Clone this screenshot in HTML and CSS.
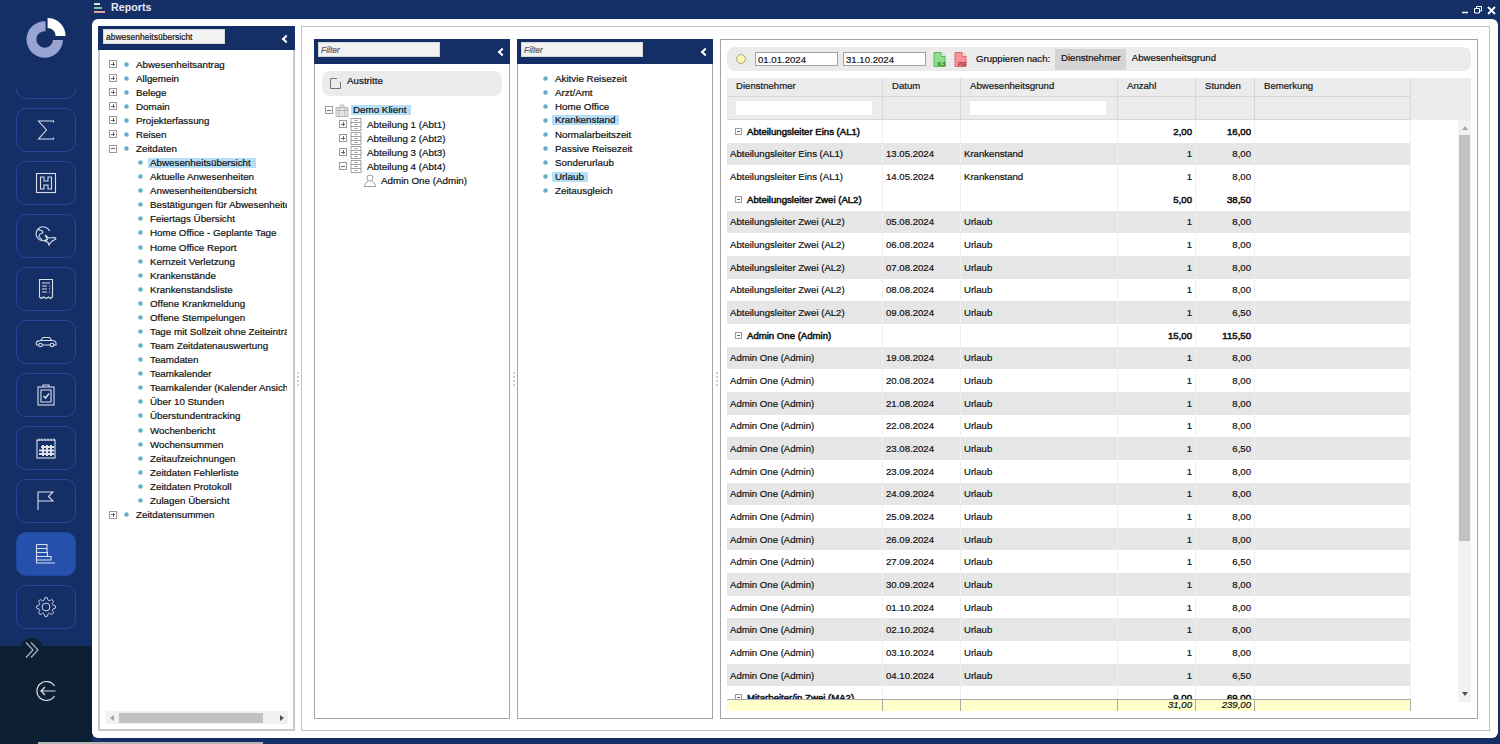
FILE: index.html
```html
<!DOCTYPE html>
<html lang="de">
<head>
    <meta charset="UTF-8">
    <meta name="viewport" content="width=device-width, initial-scale=1.0">
    <title>Reports</title>
    <link rel="stylesheet" href="styles.css">
</head>
<body>

    <!-- Navigation links -->
    <div class="sidebar">
        <div class="logo">
            <svg width="50" height="50" viewBox="0 0 50 50">
                <path d="M24.500 8.300 A18.200 18.200 0 1 0 41.900 27 L32 27 A8.300 8.300 0 1 1 24.500 18.200 Z" fill="#9aa4d2"/>
                <path d="M26.600 5 A18 18 0 0 1 44.600 23 L34.600 23 A8 8 0 0 0 26.600 15 Z" fill="#fff"/>
            </svg>
        </div>
        <div class="nav-list">
            <div class="nav-button"></div>
            <div class="nav-button">
                <svg viewBox="0 0 24 24"><path d="M19.500 4.500 V3 H4.500 L12.500 12 L4.500 21 H19.500 V19.500"/></svg>
            </div>
            <div class="nav-button">
                <svg viewBox="0 0 24 24"><rect x="2.500" y="2.500" width="19" height="19"/><path d="M6.500 6 H10 V10 H14 V6 H17.500 V18 H14 V14 H10 V18 H6.500 Z"/></svg>
            </div>
            <div class="nav-button">
                <svg viewBox="0 0 24 24"><path d="M13 15.500 A7 7 0 1 1 15.500 7"/><path d="M4 5 C6 7 9 6 9 8 C9 10 5 9 5 12 C5 14 7 14 8 16"/><path d="M11 11 L14.500 14 L20 13.500 C22 13.500 22.500 15 21 15.500 L17.500 17.500 L15 21 L14 18.500 L11 17 L13.500 15.500 Z"/></svg>
            </div>
            <div class="nav-button">
                <svg viewBox="0 0 24 24"><path d="M5.500 2.500 H18.500 V20 L16.500 21.500 L14.500 20 L12 21.500 L9.500 20 L7.500 21.500 L5.500 20 Z"/><path d="M8 6 H16 M8 9 H13 M15 9 H16 M8 12 H13 M15 12 H16 M8 15 H13 M15 15 H16"/></svg>
            </div>
            <div class="nav-button">
                <svg viewBox="0 0 24 24"><g transform="translate(0 -2)"><path d="M5 17 H3 C2 17 2 15 2.500 14 C3 13 5 13 6.500 12.500 L9 9.500 H15.500 L18 12.500 C20 12.500 22 13 22 15 V17 H19.500 M8 17 H16.500 M6.500 12.500 H18"/><circle cx="6.500" cy="17" r="1.800"/><circle cx="18" cy="17" r="1.800"/></g></svg>
            </div>
            <div class="nav-button">
                <svg viewBox="0 0 24 24"><rect x="4" y="4" width="16" height="18"/><path d="M9 4 V2 H15 V4"/><path d="M7 7 H17 V19 H7 Z"/><path d="M9.500 13 L11.500 15 L15 10.500" stroke-width="1.500"/></svg>
            </div>
            <div class="nav-button">
                <svg viewBox="0 0 24 24"><rect x="3" y="4" width="18" height="18"/><path d="M5 2.500 V5 M8 2.500 V5 M11 2.500 V5 M14 2.500 V5 M17 2.500 V5 M20 2.500 V5"/><path d="M7 11 H20 M5 14.500 H20 M5 18 H20 M9 9 V20 M13 9 V20 M17 9 V20" stroke-width="2"/></svg>
            </div>
            <div class="nav-button">
                <svg viewBox="0 0 24 24"><path d="M4 21 V3 H19 L14.500 7.500 L19 12 H4"/></svg>
            </div>
            <div class="nav-button active">
                <svg viewBox="0 0 24 24"><path d="M2.500 2.500 V21 H21 M2.500 2.500 H13 V6.500 H2.500 M2.500 6.500 H13 V10.500 H2.500 M2.500 10.500 H13.500 V14.500 H2.500 M13.500 14.500 H17 V18 H2.500"/></svg>
            </div>
            <div class="nav-button">
                <svg viewBox="0 0 24 24"><g transform="translate(1.600 1.600) scale(.87)"><circle cx="12" cy="12" r="4.500"/><path d="M19.400 15a1.650 1.650 0 0 0 .33 1.820l.06.06a2 2 0 0 1 0 2.830 2 2 0 0 1-2.830 0l-.06-.06a1.650 1.650 0 0 0-1.820-.33 1.650 1.650 0 0 0-1 1.510V21a2 2 0 0 1-2 2 2 2 0 0 1-2-2v-.09A1.650 1.650 0 0 0 9 19.400a1.650 1.650 0 0 0-1.820.33l-.06.06a2 2 0 0 1-2.830 0 2 2 0 0 1 0-2.830l.06-.06a1.650 1.650 0 0 0 .33-1.820 1.650 1.650 0 0 0-1.510-1H3a2 2 0 0 1-2-2 2 2 0 0 1 2-2h.09A1.650 1.650 0 0 0 4.600 9a1.650 1.650 0 0 0-.33-1.820l-.06-.06a2 2 0 0 1 0-2.830 2 2 0 0 1 2.830 0l.06.06a1.650 1.650 0 0 0 1.820.33H9a1.650 1.650 0 0 0 1-1.510V3a2 2 0 0 1 2-2 2 2 0 0 1 2 2v.09a1.650 1.650 0 0 0 1 1.510 1.650 1.650 0 0 0 1.820-.33l.06-.06a2 2 0 0 1 2.830 0 2 2 0 0 1 0 2.830l-.06.06a1.650 1.650 0 0 0-.33 1.820V9a1.650 1.650 0 0 0 1.510 1H21a2 2 0 0 1 2 2 2 2 0 0 1-2 2h-.09a1.650 1.650 0 0 0-1.510 1z"/></g></svg>
            </div>
        </div>
        <div class="sidebar-bottom">
            <div class="expand-button">
                <svg width="16" height="18" viewBox="0 0 16 18"><path d="M2 1.500 L9 9 L2 16.500 M7 1.500 L14 9 L7 16.500"/></svg>
            </div>
            <div class="logout">
                <svg width="22" height="22" viewBox="0 0 22 22"><path d="M19.500 6 A9.500 9.500 0 1 0 19.500 16"/><path d="M20.500 11 H6 M10 7 L6 11 L10 15"/></svg>
            </div>
        </div>
    </div>

    <div class="main">
        <div class="titlebar">
            <svg class="title-icon" width="13" height="12" viewBox="0 0 13 12">
                <rect x="1" y="0" width="6" height="2" fill="#d5e6da"/>
                <rect x="1" y="4" width="8" height="2" fill="#7fc9a8"/>
                <rect x="1" y="8" width="11" height="2" fill="#e0a5a0"/>
            </svg>
            <span class="title-text">Reports</span>
            <div class="window-controls">
                <svg width="8" height="8" viewBox="0 0 8 8"><path d="M1 6.500 H7" stroke-width="1.500"/></svg>
                <svg width="8" height="8" viewBox="0 0 8 8"><path d="M0.500 2.500 H5.500 V7 H0.500 Z M2.500 2.500 V0.500 H7.500 V5 H5.500"/></svg>
                <svg width="9" height="9" viewBox="0 0 9 9"><path d="M1 1 L8 8 M8 1 L1 8" stroke-width="1.800"/></svg>
            </div>
        </div>

        <div class="window">
            <!-- Berichtsbaum -->
            <div class="report-tree">
                <div class="panel-header">
                    <input class="filter-input" type="text" value="abwesenheitsübersicht">
                    <span class="collapse-icon"></span>
                </div>
                <div class="tree-scroll">
                    <div class="tree-row"><span class="toggle plus"></span><span class="dot"></span><span>Abwesenheitsantrag</span></div>
                    <div class="tree-row"><span class="toggle plus"></span><span class="dot"></span><span>Allgemein</span></div>
                    <div class="tree-row"><span class="toggle plus"></span><span class="dot"></span><span>Belege</span></div>
                    <div class="tree-row"><span class="toggle plus"></span><span class="dot"></span><span>Domain</span></div>
                    <div class="tree-row"><span class="toggle plus"></span><span class="dot"></span><span>Projekterfassung</span></div>
                    <div class="tree-row"><span class="toggle plus"></span><span class="dot"></span><span>Reisen</span></div>
                    <div class="tree-row"><span class="toggle"></span><span class="dot"></span><span>Zeitdaten</span></div>
                    <div class="tree-row child"><span class="dot"></span><span class="marked">Abwesenheitsübersicht</span></div>
                    <div class="tree-row child"><span class="dot"></span><span>Aktuelle Anwesenheiten</span></div>
                    <div class="tree-row child"><span class="dot"></span><span>Anwesenheitenübersicht</span></div>
                    <div class="tree-row child"><span class="dot"></span><span>Bestätigungen für Abwesenheiten</span></div>
                    <div class="tree-row child"><span class="dot"></span><span>Feiertags Übersicht</span></div>
                    <div class="tree-row child"><span class="dot"></span><span>Home Office - Geplante Tage</span></div>
                    <div class="tree-row child"><span class="dot"></span><span>Home Office Report</span></div>
                    <div class="tree-row child"><span class="dot"></span><span>Kernzeit Verletzung</span></div>
                    <div class="tree-row child"><span class="dot"></span><span>Krankenstände</span></div>
                    <div class="tree-row child"><span class="dot"></span><span>Krankenstandsliste</span></div>
                    <div class="tree-row child"><span class="dot"></span><span>Offene Krankmeldung</span></div>
                    <div class="tree-row child"><span class="dot"></span><span>Offene Stempelungen</span></div>
                    <div class="tree-row child"><span class="dot"></span><span>Tage mit Sollzeit ohne Zeiteinträge</span></div>
                    <div class="tree-row child"><span class="dot"></span><span>Team Zeitdatenauswertung</span></div>
                    <div class="tree-row child"><span class="dot"></span><span>Teamdaten</span></div>
                    <div class="tree-row child"><span class="dot"></span><span>Teamkalender</span></div>
                    <div class="tree-row child"><span class="dot"></span><span>Teamkalender (Kalender Ansicht)</span></div>
                    <div class="tree-row child"><span class="dot"></span><span>Über 10 Stunden</span></div>
                    <div class="tree-row child"><span class="dot"></span><span>Überstundentracking</span></div>
                    <div class="tree-row child"><span class="dot"></span><span>Wochenbericht</span></div>
                    <div class="tree-row child"><span class="dot"></span><span>Wochensummen</span></div>
                    <div class="tree-row child"><span class="dot"></span><span>Zeitaufzeichnungen</span></div>
                    <div class="tree-row child"><span class="dot"></span><span>Zeitdaten Fehlerliste</span></div>
                    <div class="tree-row child"><span class="dot"></span><span>Zeitdaten Protokoll</span></div>
                    <div class="tree-row child"><span class="dot"></span><span>Zulagen Übersicht</span></div>
                    <div class="tree-row"><span class="toggle plus"></span><span class="dot"></span><span>Zeitdatensummen</span></div>
                </div>
                <div class="h-scrollbar">
                    <span class="arrow-left"></span>
                    <span class="h-thumb"></span>
                    <span class="arrow-right"></span>
                </div>
            </div>

            <div class="splitter"></div>

            <div class="content-box">
                <!-- Klienten -->
                <div class="panel">
                    <div class="panel-header tall">
                        <input class="filter-input" type="text" placeholder="Filter">
                        <span class="collapse-icon"></span>
                    </div>
                    <div class="austritte">
                        <svg class="check-box" width="11" height="11" viewBox="0 0 11 11"><path d="M7 .5 H.5 V10.500 H10.500 V4"/></svg>
                        <span>Austritte</span>
                    </div>
                    <div class="org-tree">
                        <div class="org-row"><span class="toggle"></span>
                            <svg class="org-icon client" width="14" height="13" viewBox="0 0 14 13"><path d="M1 3.500 H13 V12.500 H1 Z M5 3.500 V1 H9 V3.500 M1 6.500 H13 M4 3.500 V12.500 M10 3.500 V12.500"/></svg>
                            <span class="marked">Demo Klient</span></div>
                        <div class="org-row level-1"><span class="toggle plus"></span>
                            <svg class="org-icon" width="12" height="13" viewBox="0 0 12 13"><path d="M1 .5 H11 V12.500 H1 Z M1 4.500 H11 M1 8.500 H11 M4.500 2.500 H7.500 M4.500 6.500 H7.500 M4.500 10.500 H7.500"/></svg>
                            <span>Abteilung 1 (Abt1)</span></div>
                        <div class="org-row level-1"><span class="toggle plus"></span>
                            <svg class="org-icon" width="12" height="13" viewBox="0 0 12 13"><path d="M1 .5 H11 V12.500 H1 Z M1 4.500 H11 M1 8.500 H11 M4.500 2.500 H7.500 M4.500 6.500 H7.500 M4.500 10.500 H7.500"/></svg>
                            <span>Abteilung 2 (Abt2)</span></div>
                        <div class="org-row level-1"><span class="toggle plus"></span>
                            <svg class="org-icon" width="12" height="13" viewBox="0 0 12 13"><path d="M1 .5 H11 V12.500 H1 Z M1 4.500 H11 M1 8.500 H11 M4.500 2.500 H7.500 M4.500 6.500 H7.500 M4.500 10.500 H7.500"/></svg>
                            <span>Abteilung 3 (Abt3)</span></div>
                        <div class="org-row level-1"><span class="toggle"></span>
                            <svg class="org-icon" width="12" height="13" viewBox="0 0 12 13"><path d="M1 .5 H11 V12.500 H1 Z M1 4.500 H11 M1 8.500 H11 M4.500 2.500 H7.500 M4.500 6.500 H7.500 M4.500 10.500 H7.500"/></svg>
                            <span>Abteilung 4 (Abt4)</span></div>
                        <div class="org-row level-2">
                            <svg class="org-icon" width="12" height="13" viewBox="0 0 12 13"><circle cx="6" cy="4" r="3"/><path d="M.5 12.500 C.5 9 3 8 4 7.500 M11.500 12.500 C11.500 9 9 8 8 7.500 M.5 12.500 H11.500"/></svg>
                            <span>Admin One (Admin)</span></div>
                    </div>
                </div>

                <div class="splitter"></div>

                <!-- Abwesenheitsgründe -->
                <div class="panel">
                    <div class="panel-header tall">
                        <input class="filter-input" type="text" placeholder="Filter">
                        <span class="collapse-icon"></span>
                    </div>
                    <div class="reason-list">
                        <div class="reason-row"><span class="dot"></span><span>Akitvie Reisezeit</span></div>
                        <div class="reason-row"><span class="dot"></span><span>Arzt/Amt</span></div>
                        <div class="reason-row"><span class="dot"></span><span>Home Office</span></div>
                        <div class="reason-row"><span class="dot"></span><span class="marked">Krankenstand</span></div>
                        <div class="reason-row"><span class="dot"></span><span>Normalarbeitszeit</span></div>
                        <div class="reason-row"><span class="dot"></span><span>Passive Reisezeit</span></div>
                        <div class="reason-row"><span class="dot"></span><span>Sonderurlaub</span></div>
                        <div class="reason-row"><span class="dot"></span><span class="marked">Urlaub</span></div>
                        <div class="reason-row"><span class="dot"></span><span>Zeitausgleich</span></div>
                    </div>
                </div>

                <div class="splitter"></div>

                <!-- Auswertung -->
                <div class="report">
                    <div class="toolbar">
                        <span class="bulb"></span>
                        <input class="date-input" type="text" value="01.01.2024">
                        <input class="date-input" type="text" value="31.10.2024">
                        <svg class="file-icon" width="13" height="15" viewBox="0 0 13 15"><path d="M1 .5 H8 L12 4.500 V14.500 H1 Z" fill="#8fe08c" stroke="#5fb35f"/><path d="M8 .5 V4.500 H12" fill="#e8f7e5" stroke="#5fb35f"/><text x="4" y="14" class="file-label xls">XLS</text></svg>
                        <svg class="file-icon pdf" width="13" height="15" viewBox="0 0 13 15"><path d="M1 .5 H8 L12 4.500 V14.500 H1 Z" fill="#f4949a" stroke="#d96a70"/><path d="M8 .5 V4.500 H12" fill="#fde3e3" stroke="#d96a70"/><text x="4" y="14" class="file-label pdf-label">PDF</text></svg>
                        <span class="group-label">Gruppieren nach:</span>
                        <span class="group-chip active">Dienstnehmer</span>
                        <span class="group-chip">Abwesenheitsgrund</span>
                    </div>

                    <div class="grid-head">
                        <div class="grid-row head-row">
                            <div>Dienstnehmer</div><div>Datum</div><div>Abwesenheitsgrund</div><div>Anzahl</div><div>Stunden</div><div>Bemerkung</div>
                        </div>
                        <div class="grid-row filter-row">
                            <div><span class="col-filter"></span></div><div></div><div><span class="col-filter"></span></div><div></div><div></div><div></div>
                        </div>
                    </div>

                    <div class="grid-body">
                        <div class="grid-left">
                            <div class="rows">
                                <div class="grid-row group"><div><span class="toggle small"></span>Abteilungsleiter Eins (AL1)</div><div></div><div></div><div class="num">2,00</div><div class="num">16,00</div><div></div></div>
                                <div class="grid-row even"><div>Abteilungsleiter Eins (AL1)</div><div>13.05.2024</div><div>Krankenstand</div><div class="num">1</div><div class="num">8,00</div><div></div></div>
                                <div class="grid-row"><div>Abteilungsleiter Eins (AL1)</div><div>14.05.2024</div><div>Krankenstand</div><div class="num">1</div><div class="num">8,00</div><div></div></div>
                                <div class="grid-row group"><div><span class="toggle small"></span>Abteilungsleiter Zwei (AL2)</div><div></div><div></div><div class="num">5,00</div><div class="num">38,50</div><div></div></div>
                                <div class="grid-row even"><div>Abteilungsleiter Zwei (AL2)</div><div>05.08.2024</div><div>Urlaub</div><div class="num">1</div><div class="num">8,00</div><div></div></div>
                                <div class="grid-row"><div>Abteilungsleiter Zwei (AL2)</div><div>06.08.2024</div><div>Urlaub</div><div class="num">1</div><div class="num">8,00</div><div></div></div>
                                <div class="grid-row even"><div>Abteilungsleiter Zwei (AL2)</div><div>07.08.2024</div><div>Urlaub</div><div class="num">1</div><div class="num">8,00</div><div></div></div>
                                <div class="grid-row"><div>Abteilungsleiter Zwei (AL2)</div><div>08.08.2024</div><div>Urlaub</div><div class="num">1</div><div class="num">8,00</div><div></div></div>
                                <div class="grid-row even"><div>Abteilungsleiter Zwei (AL2)</div><div>09.08.2024</div><div>Urlaub</div><div class="num">1</div><div class="num">6,50</div><div></div></div>
                                <div class="grid-row group"><div><span class="toggle small"></span>Admin One (Admin)</div><div></div><div></div><div class="num">15,00</div><div class="num">115,50</div><div></div></div>
                                <div class="grid-row even"><div>Admin One (Admin)</div><div>19.08.2024</div><div>Urlaub</div><div class="num">1</div><div class="num">8,00</div><div></div></div>
                                <div class="grid-row"><div>Admin One (Admin)</div><div>20.08.2024</div><div>Urlaub</div><div class="num">1</div><div class="num">8,00</div><div></div></div>
                                <div class="grid-row even"><div>Admin One (Admin)</div><div>21.08.2024</div><div>Urlaub</div><div class="num">1</div><div class="num">8,00</div><div></div></div>
                                <div class="grid-row"><div>Admin One (Admin)</div><div>22.08.2024</div><div>Urlaub</div><div class="num">1</div><div class="num">8,00</div><div></div></div>
                                <div class="grid-row even"><div>Admin One (Admin)</div><div>23.08.2024</div><div>Urlaub</div><div class="num">1</div><div class="num">6,50</div><div></div></div>
                                <div class="grid-row"><div>Admin One (Admin)</div><div>23.09.2024</div><div>Urlaub</div><div class="num">1</div><div class="num">8,00</div><div></div></div>
                                <div class="grid-row even"><div>Admin One (Admin)</div><div>24.09.2024</div><div>Urlaub</div><div class="num">1</div><div class="num">8,00</div><div></div></div>
                                <div class="grid-row"><div>Admin One (Admin)</div><div>25.09.2024</div><div>Urlaub</div><div class="num">1</div><div class="num">8,00</div><div></div></div>
                                <div class="grid-row even"><div>Admin One (Admin)</div><div>26.09.2024</div><div>Urlaub</div><div class="num">1</div><div class="num">8,00</div><div></div></div>
                                <div class="grid-row"><div>Admin One (Admin)</div><div>27.09.2024</div><div>Urlaub</div><div class="num">1</div><div class="num">6,50</div><div></div></div>
                                <div class="grid-row even"><div>Admin One (Admin)</div><div>30.09.2024</div><div>Urlaub</div><div class="num">1</div><div class="num">8,00</div><div></div></div>
                                <div class="grid-row"><div>Admin One (Admin)</div><div>01.10.2024</div><div>Urlaub</div><div class="num">1</div><div class="num">8,00</div><div></div></div>
                                <div class="grid-row even"><div>Admin One (Admin)</div><div>02.10.2024</div><div>Urlaub</div><div class="num">1</div><div class="num">8,00</div><div></div></div>
                                <div class="grid-row"><div>Admin One (Admin)</div><div>03.10.2024</div><div>Urlaub</div><div class="num">1</div><div class="num">8,00</div><div></div></div>
                                <div class="grid-row even"><div>Admin One (Admin)</div><div>04.10.2024</div><div>Urlaub</div><div class="num">1</div><div class="num">6,50</div><div></div></div>
                                <div class="grid-row group"><div><span class="toggle small"></span>Mitarbeiter/in Zwei (MA2)</div><div></div><div></div><div class="num">9,00</div><div class="num">69,00</div><div></div></div>
                            </div>
                            <div class="grid-row total-row">
                                <div></div><div></div><div></div><div class="num">31,00</div><div class="num">239,00</div><div></div>
                            </div>
                        </div>
                        <div class="v-scrollbar">
                            <span class="arrow-up"></span>
                            <span class="v-thumb"></span>
                            <span class="arrow-down"></span>
                        </div>
                    </div>
                </div>
            </div>
        </div>
    </div>

    <div class="bottom-strip"></div>

</body>
</html>
```

FILE: styles.css
```css
/* Grundlayout */
html, body {
    height: 100%;
}

body {
    margin: 0;
    display: flex;
    height: 744px;
    overflow: hidden;
    background-color: #142f66;
    font-family: "Liberation Sans", Arial, sans-serif;
    font-size: 9.8px;
    color: #111;
    -webkit-text-stroke: .2px #111;
}

input {
    font-family: inherit;
    box-sizing: border-box;
    outline: none;
}

/* Navigation */
.sidebar {
    width: 92px;
    flex-shrink: 0;
    display: flex;
    flex-direction: column;
}

.logo {
    height: 89px;
    padding: 13px 0 0 21px;
    box-sizing: border-box;
}

.logo svg {
    display: block;
}

.nav-list {
    height: 540px;
    padding: 0 16px;
    display: flex;
    flex-direction: column;
    justify-content: flex-end;
    gap: 9px;
    overflow: hidden;
}

.nav-button {
    flex-shrink: 0;
    width: 60px;
    height: 44px;
    box-sizing: border-box;
    border: 1.5px solid #23479a;
    border-radius: 10px;
    display: flex;
    align-items: center;
    justify-content: center;
}

.nav-button.active {
    background-color: #2550ab;
}

.nav-button svg {
    width: 24px;
    height: 24px;
    fill: none;
    stroke: #d9deea;
    stroke-width: 1.1;
}

.sidebar-bottom {
    margin-top: 17px;
    flex: 1;
    background-color: #0d1f33;
    position: relative;
}

.expand-button {
    position: absolute;
    left: 20px;
    top: -8px;
    width: 23px;
    height: 23px;
    border-radius: 50%;
    background-color: #0d1f33;
    display: flex;
    align-items: center;
    justify-content: center;
}

.expand-button svg {
    fill: none;
    stroke: #a9b6cf;
    stroke-width: 1.2;
}

.logout {
    padding: 34px 0 0 35px;
}

.logout svg {
    fill: none;
    stroke: #dfe2e6;
    stroke-width: 1.2;
}

/* Titelleiste */
.main {
    flex: 1;
    min-width: 0;
    display: flex;
    flex-direction: column;
    padding: 0 2px 6px 0;
}

.titlebar {
    height: 19px;
    flex-shrink: 0;
    display: flex;
    align-items: center;
    padding-bottom: 5px;
    box-sizing: border-box;
    -webkit-text-stroke: 0;
}

.title-icon {
    margin: 3px 0 0 1px;
}

.title-text {
    margin-left: 5px;
    font-size: 10.7px;
    font-weight: bold;
    color: #e6e9f1;
}

.window-controls {
    margin-left: auto;
    padding: 6px 2px 0 0;
    display: flex;
    align-items: center;
    gap: 5px;
}

.window-controls svg {
    fill: none;
    stroke: white;
    stroke-width: 1;
}

.window {
    flex: 1;
    min-height: 0;
    display: flex;
    background: white;
    border-radius: 6px;
    padding: 7px 8px 7px 6px;
}

/* Panels */
.report-tree {
    width: 197px;
    flex-shrink: 0;
    box-sizing: border-box;
    border: 2px solid #c9c9c9;
    border-top: none;
    display: flex;
    flex-direction: column;
}

.panel-header {
    height: 24px;
    flex-shrink: 0;
    margin: 0 -2px;
    background-color: #142f66;
    display: flex;
    padding: 3px 0 0 5px;
    box-sizing: border-box;
    position: relative;
}

.panel-header.tall {
    height: 25px;
    margin: 0 -1px;
    padding-left: 4px;
}

.filter-input {
    width: 122px;
    height: 15px;
    border: 1px solid #d8d8d8;
    background-color: #f2f2f2;
    padding: 0 2px;
    font-size: 8.5px;
    color: #222;
}

.filter-input::placeholder {
    font-style: italic;
    color: #888;
}

.collapse-icon {
    position: absolute;
    right: 6px;
    top: 10px;
    width: 4px;
    height: 4px;
    border-left: 2px solid white;
    border-bottom: 2px solid white;
    transform: rotate(45deg);
}

.panel-header.tall .collapse-icon {
    right: 5px;
}

.splitter {
    width: 6px;
    flex-shrink: 0;
    display: flex;
    align-items: center;
    justify-content: center;
}

.splitter::before {
    content: "";
    height: 14px;
    border-left: 2px dotted #d0d0d0;
}

/* Bäume */
.tree-scroll {
    flex: 1;
    min-height: 0;
    overflow: hidden;
    padding: 7px 0 0 9px;
}

.tree-row {
    height: 14.09px;
    display: flex;
    align-items: center;
    white-space: nowrap;
    margin-right: 6px;
    overflow: hidden;
}

.tree-row.child {
    padding-left: 29px;
}

.toggle {
    flex-shrink: 0;
    width: 6px;
    height: 6px;
    border: 1px solid #9a9a9a;
    background: linear-gradient(#666, #666) center / 4px 1px no-repeat;
    box-sizing: content-box;
    display: inline-block;
}

.toggle.plus {
    background:
        linear-gradient(#666, #666) center / 4px 1px no-repeat,
        linear-gradient(#666, #666) center / 1px 4px no-repeat;
}

.dot {
    flex-shrink: 0;
    width: 5px;
    height: 5px;
    border-radius: 50%;
    background-color: #5fa8c8;
    border: .5px solid #8fc6dc;
    box-sizing: border-box;
}

.tree-row .toggle + .dot {
    margin: 0 7px 0 7px;
}

.child .dot {
    margin-right: 7px;
}

.marked {
    background-color: #b5def7;
    padding: 0 5px 0 2px;
    margin-left: -2px;
    line-height: 10px;
}

.h-scrollbar {
    height: 13px;
    margin: 0 5px 5px 6px;
    background-color: #f1f1f1;
    display: flex;
    align-items: center;
    padding: 0 4px;
}

.h-thumb {
    width: 144px;
    height: 10px;
    margin-left: 5px;
    background-color: #c1c1c1;
}

.arrow-left {
    border: 3px solid transparent;
    border-left: none;
    border-right: 4px solid #a3a3a3;
}

.arrow-right {
    margin-left: auto;
    border: 3px solid transparent;
    border-right: none;
    border-left: 4px solid #505050;
}

.content-box {
    flex: 1;
    min-width: 0;
    display: flex;
    box-sizing: border-box;
    border: 1.5px solid #c2c2c2;
    padding: 12px 11px 11px 12px;
}

.content-box > .splitter {
    width: 7px;
}

.panel {
    width: 196px;
    flex-shrink: 0;
    box-sizing: border-box;
    border: 1px solid #a5a5a5;
    border-top: none;
}

.austritte {
    margin: 7px 7px 0 7px;
    height: 25px;
    background-color: #ebebeb;
    border-radius: 8px;
    display: flex;
    align-items: center;
    padding-left: 8px;
    padding-bottom: 6px;
    box-sizing: border-box;
    gap: 6px;
}

.check-box {
    margin-top: 6px;
    fill: none;
    stroke: #777;
    -webkit-text-stroke: 0;
}

.org-tree {
    margin-top: 7px;
    padding-left: 10px;
}

.org-row {
    height: 14.09px;
    display: flex;
    align-items: center;
    white-space: nowrap;
}

.org-row.level-1 {
    padding-left: 14px;
}

.org-row.level-2 {
    padding-left: 36px;
}

.org-icon {
    margin: 0 5px 0 3px;
    fill: none;
    stroke: #888;
    stroke-width: .8;
    flex-shrink: 0;
}

.org-icon.client {
    margin: 0 4px 0 2px;
    fill: #e6e6e6;
    stroke: #aaa;
}

.reason-list {
    padding: 7px 0 0 25px;
}

.reason-row {
    height: 14.09px;
    display: flex;
    align-items: center;
    gap: 7px;
    white-space: nowrap;
}

.reason-row .marked {
    padding: 0 4px 0 3px;
    margin-left: -3px;
}

/* Auswertung */
.report {
    flex: 1;
    min-width: 0;
    box-sizing: border-box;
    border: 1px solid #a5a5a5;
    padding: 7px 6px 0 6px;
    display: flex;
    flex-direction: column;
    font-size: 9.6px;
}

.toolbar {
    height: 24px;
    flex-shrink: 0;
    background-color: #ebebeb;
    border-radius: 8px;
    display: flex;
    align-items: center;
}

.bulb {
    width: 10px;
    height: 10px;
    margin-left: 9px;
    border-radius: 50%;
    background-color: #fdf7b0;
    border: 1px solid #a8a88a;
    box-sizing: border-box;
}

.date-input {
    width: 83px;
    height: 14px;
    margin-left: 5px;
    border: 1px solid #a0a0a0;
    background: white;
    padding: 0 2px;
    font-size: 9.6px;
    color: #222;
}

.bulb + .date-input {
    margin-left: 9px;
}

.file-icon {
    margin-left: 7px;
    flex-shrink: 0;
}

.file-icon.pdf {
    margin-left: 8px;
}

.file-label {
    font-size: 4.5px;
    font-weight: bold;
    -webkit-text-stroke: 0;
}

.file-label.xls {
    fill: #1b6b1b;
}

.file-label.pdf-label {
    fill: #a02020;
}

.group-label {
    margin-left: 9px;
    padding-bottom: 2px;
    width: 79px;
    flex-shrink: 0;
    white-space: nowrap;
}

.group-chip {
    height: 21px;
    line-height: 17px;
    padding: 0 6px;
    box-sizing: border-box;
    white-space: nowrap;
}

.group-chip.active {
    background-color: #d4d4d4;
    padding-right: 5px;
}

.grid-head {
    margin-top: 7px;
    flex-shrink: 0;
    background-color: #ebebeb;
}

.grid-row {
    display: grid;
    grid-template-columns: 156px 78px 157px 78px 59px 156px;
    width: 684px;
    height: 22.67px;
    align-items: stretch;
}

.grid-row > div {
    box-sizing: border-box;
    border-right: 1px solid #f0f0f0;
    padding: 0 3px;
    display: flex;
    align-items: center;
    white-space: nowrap;
    overflow: hidden;
}

.grid-row > .num {
    justify-content: flex-end;
    padding-right: 3px;
}

.head-row {
    height: 19px;
}

.filter-row {
    height: 23px;
}

.head-row > div,
.filter-row > div {
    border-right: 1px solid #d6d6d6;
    border-bottom: 1px solid #d6d6d6;
    padding: 0 9px 3px 9px;
    color: #222;
}

.filter-row > div {
    padding: 0 9px;
}

.col-filter {
    width: 136px;
    height: 14px;
    background: white;
}

.grid-body {
    flex: 1;
    min-height: 0;
    display: flex;
}

.grid-left {
    width: 684px;
    display: flex;
    flex-direction: column;
    height: 591px;
}

.rows {
    height: 579px;
    overflow: hidden;
    flex-shrink: 0;
}

.even {
    background-color: #e6e6e6;
}

.group {
    -webkit-text-stroke: .5px #111;
}

.group > div:first-child {
    padding-left: 8px;
}

.toggle.small {
    margin-right: 5px;
    width: 5px;
    height: 5px;
    background-size: 3px 1px;
}

.total-row {
    height: 12px;
    background-color: #ffffcc;
    font-style: italic;
    flex-shrink: 0;
}

.total-row > div {
    border-right: 1px solid #aaa;
    border-top: 1px solid #aaa;
    align-items: flex-start;
    line-height: 9px;
    overflow: visible;
}

.v-scrollbar {
    width: 13px;
    height: 582px;
    margin-left: 47px;
    flex-shrink: 0;
    background-color: #f1f1f1;
    display: flex;
    flex-direction: column;
    align-items: center;
    padding-top: 6px;
    box-sizing: border-box;
}

.arrow-up {
    border: 3px solid transparent;
    border-top: none;
    border-bottom: 4px solid #a3a3a3;
}

.v-thumb {
    width: 11px;
    height: 406px;
    margin-top: 5px;
    background-color: #c1c1c1;
}

.arrow-down {
    margin-top: auto;
    margin-bottom: 6px;
    border: 3px solid transparent;
    border-bottom: none;
    border-top: 4px solid #505050;
}

.bottom-strip {
    position: absolute;
    left: 38px;
    bottom: 0;
    width: 225px;
    height: 2px;
    background-color: #b5b5b5;
}
```
